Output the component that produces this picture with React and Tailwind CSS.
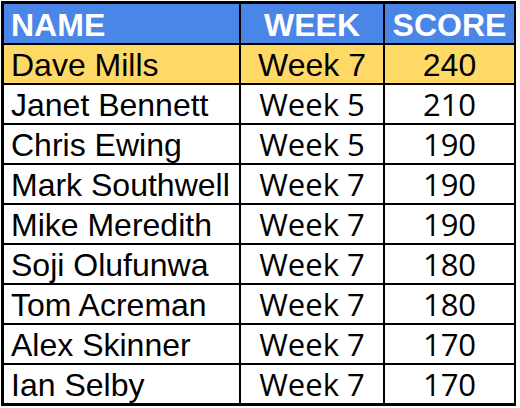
import React from "react";

const rows = [
  { name: "Dave Mills", week: "Week 7", score: 240, top: true },
  { name: "Janet Bennett", week: "Week 5", score: 210 },
  { name: "Chris Ewing", week: "Week 5", score: 190 },
  { name: "Mark Southwell", week: "Week 7", score: 190 },
  { name: "Mike Meredith", week: "Week 7", score: 190 },
  { name: "Soji Olufunwa", week: "Week 7", score: 180 },
  { name: "Tom Acreman", week: "Week 7", score: 180 },
  { name: "Alex Skinner", week: "Week 7", score: 170 },
  { name: "Ian Selby", week: "Week 7", score: 170 },
];

export default function App() {
  return (
    <div className="w-[520px] h-[408px] bg-white pt-px pl-px">
      <div className="w-[515px] border-[3px] border-black bg-black grid grid-cols-[235px_142px_129px] gap-x-[2px] gap-y-[2px] font-['Liberation_Sans',Arial,sans-serif] text-[32px] text-black">
        {/* header */}
        <div className="h-[39px] bg-[#4a86e8] text-white font-bold flex items-center pl-[7px] pt-[2px]">
          NAME
        </div>
        <div className="h-[39px] bg-[#4a86e8] text-white font-bold flex items-center justify-center pt-[2px]">
          WEEK
        </div>
        <div className="h-[39px] bg-[#4a86e8] text-white font-bold flex items-center justify-center pt-[2px]">
          SCORE
        </div>

        {rows.map((r) =>
          r.top ? (
            <React.Fragment key={r.name}>
              <div className="h-[38px] bg-[#ffd966] flex items-center pl-[7px] pt-px">
                {r.name}
              </div>
              <div className="h-[38px] bg-[#ffd966] flex items-center justify-center pt-px">
                {r.week}
              </div>
              <div className="h-[38px] bg-[#ffd966] flex items-center justify-center pt-px">
                {r.score}
              </div>
            </React.Fragment>
          ) : (
            <React.Fragment key={r.name}>
              <div className="h-[38px] bg-white flex items-center pl-[7px] pt-px">
                {r.name}
              </div>
              <div className="h-[38px] bg-white flex items-center justify-center font-['Open_Sans',sans-serif] text-[31px] leading-[38px]">
                {r.week}
              </div>
              <div className="h-[38px] bg-white flex items-center justify-center font-['Open_Sans',sans-serif] text-[31px] leading-[38px]">
                {r.score}
              </div>
            </React.Fragment>
          )
        )}
      </div>
    </div>
  );
}
